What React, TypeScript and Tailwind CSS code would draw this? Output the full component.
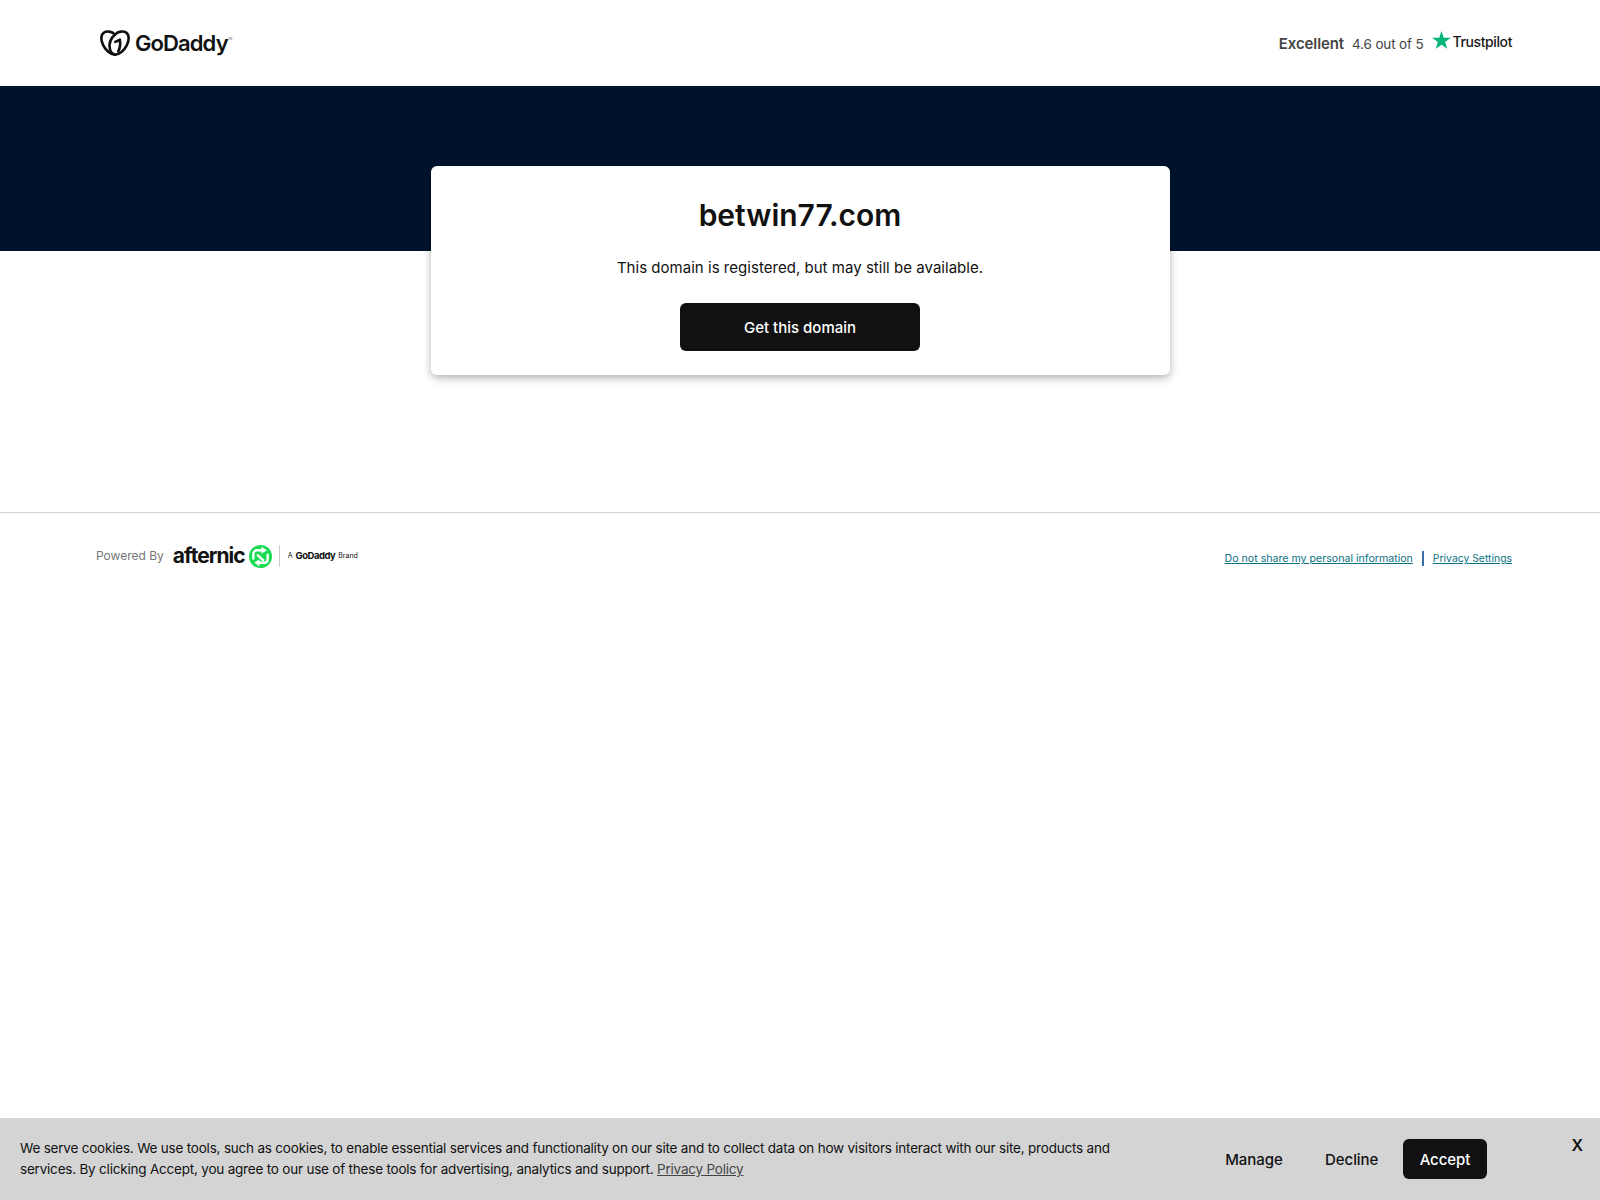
import React from 'react';

const GoDaddyHeart: React.FC<{ className?: string }> = ({ className }) => (
  <svg viewBox="0 0 32 28" className={className} fill="none" stroke="#111111" strokeWidth="2.800" strokeLinecap="round" strokeLinejoin="round">
    <path d="M16 5C12.500 1.500 7 .8 4 3 .5 5.500.8 11.500 3.500 16.500 6 21.500 11 26.500 16 26.500c5 0 10-5 12.500-10 2.700-5 3-11 -.5-13.500C25 .8 19.500 1.500 16 5" />
    <path d="M16 5c-4.500 4-6.500 10-5.500 15 .5 3 2.500 5.500 5.500 6.500" />
    <path d="M21.300 10.500l-5 2.300M21 10.500c1 4 .5 8.500-1.500 12.500" />
  </svg>
);

const TrustpilotStar: React.FC = () => (
  <svg viewBox="0 0 24 23" className="-mt-[7px] h-[18px] w-[19px]">
    <path fill="#00b67a" d="M12 0l2.830 8.700H24l-7.420 5.390L19.400 22.800 12 17.420 4.600 22.800l2.820-8.710L0 8.700h9.170z" />
  </svg>
);

const AfternicIcon: React.FC = () => (
  <svg viewBox="0 0 24 24" className="h-[23px] w-[23px]">
    <circle cx="12" cy="12" r="12" fill="#1bdb52" />
    <path d="M4.500 15V9.500C4.500 7 6.300 5.500 8.500 5.500h5" fill="none" stroke="#ffffff" strokeWidth="2.400" />
    <path d="M19.500 9v5.500c0 2.500-1.800 4-4 4h-5" fill="none" stroke="#ffffff" strokeWidth="2.400" />
    <path d="M8.500 10l7 6.500" stroke="#ffffff" strokeWidth="2.400" />
    <path d="M13 1.800l5.500 3.700-5.500 3.700zM11 14.800l-5.500 3.700 5.500 3.700z" fill="#ffffff" />
  </svg>
);

const sans = "font-['Inter','Noto_Sans',sans-serif]";

export default function App() {
  return (
    <div className={`${sans} relative min-h-[1200px] bg-white text-[#111111]`}>
      <header className="flex h-[86px] items-center justify-between pl-[100px] pr-[88px]">
        <div className="flex items-center">
          <GoDaddyHeart className="h-[28px] w-[30px]" />
          <span className="ml-[5px] text-[22px] leading-none font-semibold tracking-[-0.9px]">GoDaddy</span>
          <span className="-mt-[8px] text-[3px] text-[#666666]">TM</span>
        </div>
        <div className="flex items-center text-[#444444]">
          <span className="mt-[2px] mr-[8px] text-[15px] font-semibold tracking-[-0.1px]">Excellent</span>
          <span className="mt-[2px] mr-[8px] text-[13.500px] tracking-[-0.15px]">4.6 out of 5</span>
          <TrustpilotStar />
          <span className="-mt-[4px] ml-[2px] text-[14px] font-medium tracking-[-0.4px] text-[#191919]">Trustpilot</span>
        </div>
      </header>

      <div className="h-[165px] bg-[#00132d]" />

      <main className="flex h-[261px] justify-center">
        <div className="-mt-[85px] flex h-[209px] w-[739px] flex-col items-center rounded-[6px] bg-white pt-[31px] shadow-[0_3px_8px_rgba(0,0,0,0.3)]">
          <h1 className="text-[30px] leading-[36px] font-semibold">betwin77.com</h1>
          <p className="mt-[23px] text-[15px] leading-[24px] tracking-[0.03px]">This domain is registered, but may still be available.</p>
          <button className="mt-[23px] h-[48px] w-[240px] rounded-[6px] bg-[#111111] pt-[2px] text-[15px] font-medium text-white">
            Get this domain
          </button>
        </div>
      </main>

      <footer className="flex items-start justify-between border-t border-[#d4d4d4] pt-[31px] pl-[96px] pr-[88px]">
        <div className="flex items-center">
          <span className="text-[12px] text-[#767676]">Powered By</span>
          <span className="ml-[9px] text-[21px] leading-[24px] font-bold tracking-[-0.95px]">afternic</span>
          <span className="ml-[4px]"><AfternicIcon /></span>
          <span className="mx-[7px] h-[22px] w-px bg-[#cccccc]" />
          <span className="ml-[1px] text-[7px] text-[#111111]">A</span>
          <span className="ml-[3px] text-[9.500px] font-bold tracking-[-0.5px]">GoDaddy</span>
          <span className="ml-[3px] text-[7px]">Brand</span>
        </div>
        <div className="mt-[7px] flex items-center text-[#0b7285]">
          <a className="text-[10.620px] underline">Do not share my personal information</a>
          <span className="mx-[9px] h-[15px] w-[2px] bg-[#3b6ea5]" />
          <a className="text-[10.400px] underline">Privacy Settings</a>
        </div>
      </footer>

      <div className="absolute right-0 bottom-0 left-0 flex h-[82px] bg-[#d4d4d4] pl-[20px]">
        <p className="mt-[20px] w-[1110px] text-[13.500px] leading-[21px] tracking-[-0.205px]">
          We serve cookies. We use tools, such as cookies, to enable essential services and functionality on our site and to collect data on how visitors interact with our site, products and services. By clicking Accept, you agree to our use of these tools for advertising, analytics and support.{' '}
          <a className="text-[#444444] underline">Privacy Policy</a>
        </p>
        <div className="ml-[95px] mt-[21px] flex h-[40px] items-center text-[15px] font-medium">
          <button className="mt-[2px] w-[58px] tracking-[-0.05px]">Manage</button>
          <button className="mt-[2px] ml-[42px] w-[53px] tracking-[-0.05px]">Decline</button>
          <button className="ml-[25px] h-[40px] w-[84px] rounded-[6px] bg-[#111111] pt-[2px] tracking-[-0.05px] text-white">Accept</button>
        </div>
        <button className="absolute top-[15px] right-[17px] text-[16px] font-semibold">X</button>
      </div>
    </div>
  );
}
